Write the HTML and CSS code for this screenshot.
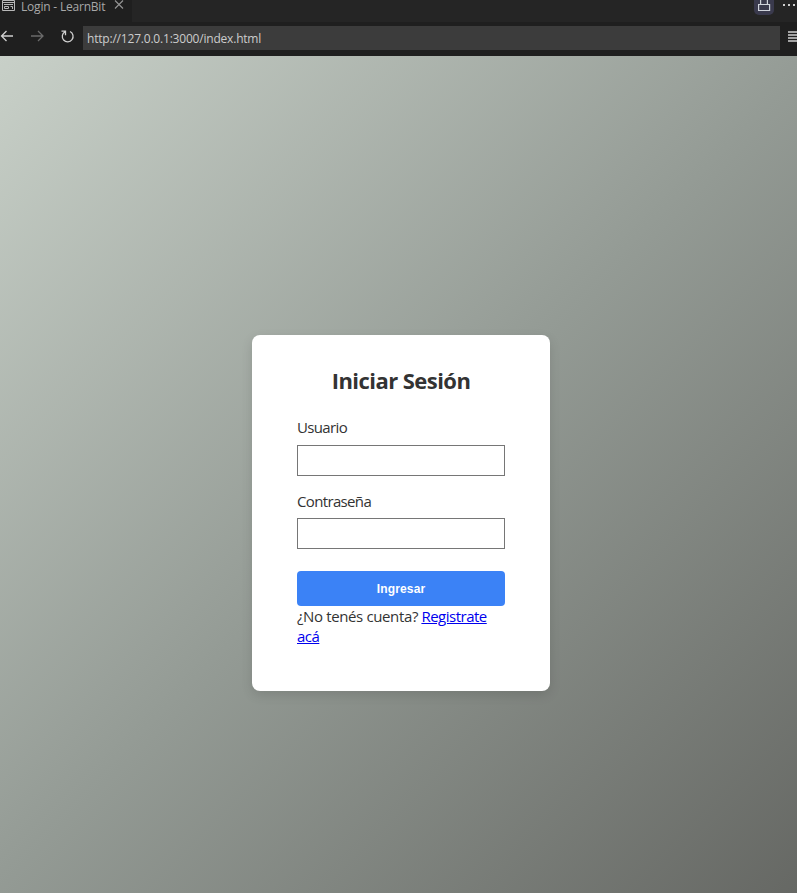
FILE: index.html
```html
<!DOCTYPE html>
<html lang="es">
<head>
<meta charset="utf-8">
<title>Login - LearnBit</title>
<link rel="stylesheet" href="styles.css">
</head>
<body>
<header>
  <div class="tabs">
    <div class="tab">
      <svg class="page-icon" width="14" height="12" viewBox="0 0 14 12" fill="none" stroke="#b8b8b8"><path d="M1.500.5h12v10h-12zM1.500 2.500h12M3 4.500h9M3.500 6.500h4v2h-4zM9.500 6.500h2v2.500"/></svg>
      <span class="tab-title">Login - LearnBit</span>
      <svg class="close" width="10" height="12" viewBox="0 0 10 12" fill="none" stroke="#969696" stroke-width="1.1"><path d="M1 .5l8 8M9 .5l-8 8"/></svg>
    </div>
    <div class="actions">
      <span class="lock"><svg width="20" height="15" viewBox="0 0 20 15" fill="none" stroke="#d0d4dc" stroke-width="1.2"><path d="M4.600 4.500h11v6h-11zM6.600 4.500v-6M13.400 4.500v-6"/></svg></span>
      <svg class="dots" width="14" height="12" viewBox="0 0 14 12" fill="#d0d0d0"><path d="M1 4h2v2H1zM6 4h2v2H6zM11 4h2v2h-2z"/></svg>
    </div>
  </div>
  <div class="toolbar">
    <svg width="82" height="34" viewBox="0 0 82 34" fill="none" stroke="#d0d0d0" stroke-width="1.3"><path d="M13 14H1.500M6.500 9l-5 5 5 5"/><path stroke="#6b6b6b" d="M31 14h12M38 9l5 5-5 5"/><path d="M70 9.500a5.400 5.400 0 1 1-5 .2M61.500 9.200h4v4"/></svg>
    <div class="address">http://127.0.0.1:3000/index.html</div>
    <svg class="menu" width="9" height="34" viewBox="0 0 9 34" stroke="#cfcfcf" stroke-width="1.3"><path d="M0 10h9M0 13h9M0 16h9M0 19h9"/></svg>
  </div>
</header>
<main>
  <form class="card">
    <h2>Iniciar Sesión</h2>
    <label class="user" for="u">Usuario</label>
    <input id="u" type="text">
    <label class="pass" for="p">Contraseña</label>
    <input id="p" type="password">
    <button type="button">Ingresar</button>
    <p><span class="ask">¿No tenés cuenta?</span> <a href="#">Registrate<br>acá</a></p>
  </form>
</main>
</body>
</html>
```
FILE: styles.css
```css
* { box-sizing: border-box; }
body {
  margin: 0;
  height: 893px;
  display: flex;
  flex-direction: column;
  overflow: hidden;
  font-family: "Open Sans", "Noto Sans", sans-serif;
  color: #333;
}
header { height: 56px; background: #1f1f1f; flex: none; }
.tabs { height: 22px; display: flex; background: #1f1f1f; }
.tab {
  width: 132px;
  display: flex;
  align-items: flex-start;
  padding-left: 1px;
  color: #a8a8a8;
  font-size: 12px;
  line-height: 13px;
}
.tab-title { width: 92px; margin-left: 6px; white-space: nowrap; letter-spacing: -0.2px; }
.close { flex: none; margin-left: 1px; }
.actions {
  flex: 1;
  display: flex;
  justify-content: flex-end;
  align-items: flex-start;
  background: #252525;
}
.lock { width: 20px; height: 15px; background: #3a3a4d; border-radius: 0 0 5px 5px; margin-right: 8px; }
.lock svg, .dots { display: block; }
.dots { margin-right: 1px; }
.toolbar { height: 34px; display: flex; }
.toolbar svg { flex: none; }
.address {
  width: 697px;
  height: 24px;
  margin: 4px 8px 0 1px;
  padding-left: 4px;
  background: #3c3c3c;
  color: #ccc;
  font-size: 12px;
  line-height: 25px;
  letter-spacing: -0.2px;
  white-space: nowrap;
}
main {
  flex: 1;
  padding: 279px 0 0 252px;
  background: linear-gradient(135deg, #c8d0c8, #949b95 50%, #666864);
}
.card {
  width: 298px;
  height: 356px;
  padding: 30px 45px;
  background: #fff;
  border-radius: 8px;
  box-shadow: 0 4px 12px rgba(0, 0, 0, .12);
}
h2 { margin: 0 0 17px; font-size: 22px; line-height: 30px; text-align: center; white-space: nowrap; letter-spacing: -0.55px; }
label { display: block; height: 33px; font-size: 15px; line-height: 30px; }
.user { letter-spacing: -0.65px; }
.pass { letter-spacing: -0.65px; height: 32px; }
input {
  display: block;
  width: 208px;
  height: 31px;
  margin: 0 0 10px;
  border: 1px solid #767676;
  background: #fff;
}
button {
  display: block;
  width: 208px;
  height: 35px;
  margin: 22px 0 0;
  border: 0;
  border-radius: 4px;
  background: #3b82f6;
  color: #fff;
  font: bold 12px "Liberation Sans", sans-serif;
  letter-spacing: 0.15px;
}
p { margin: 0; font-size: 15px; line-height: 20px; letter-spacing: -0.5px; white-space: nowrap; }
.ask { letter-spacing: -0.37px; }
a { color: #00e; }
```
